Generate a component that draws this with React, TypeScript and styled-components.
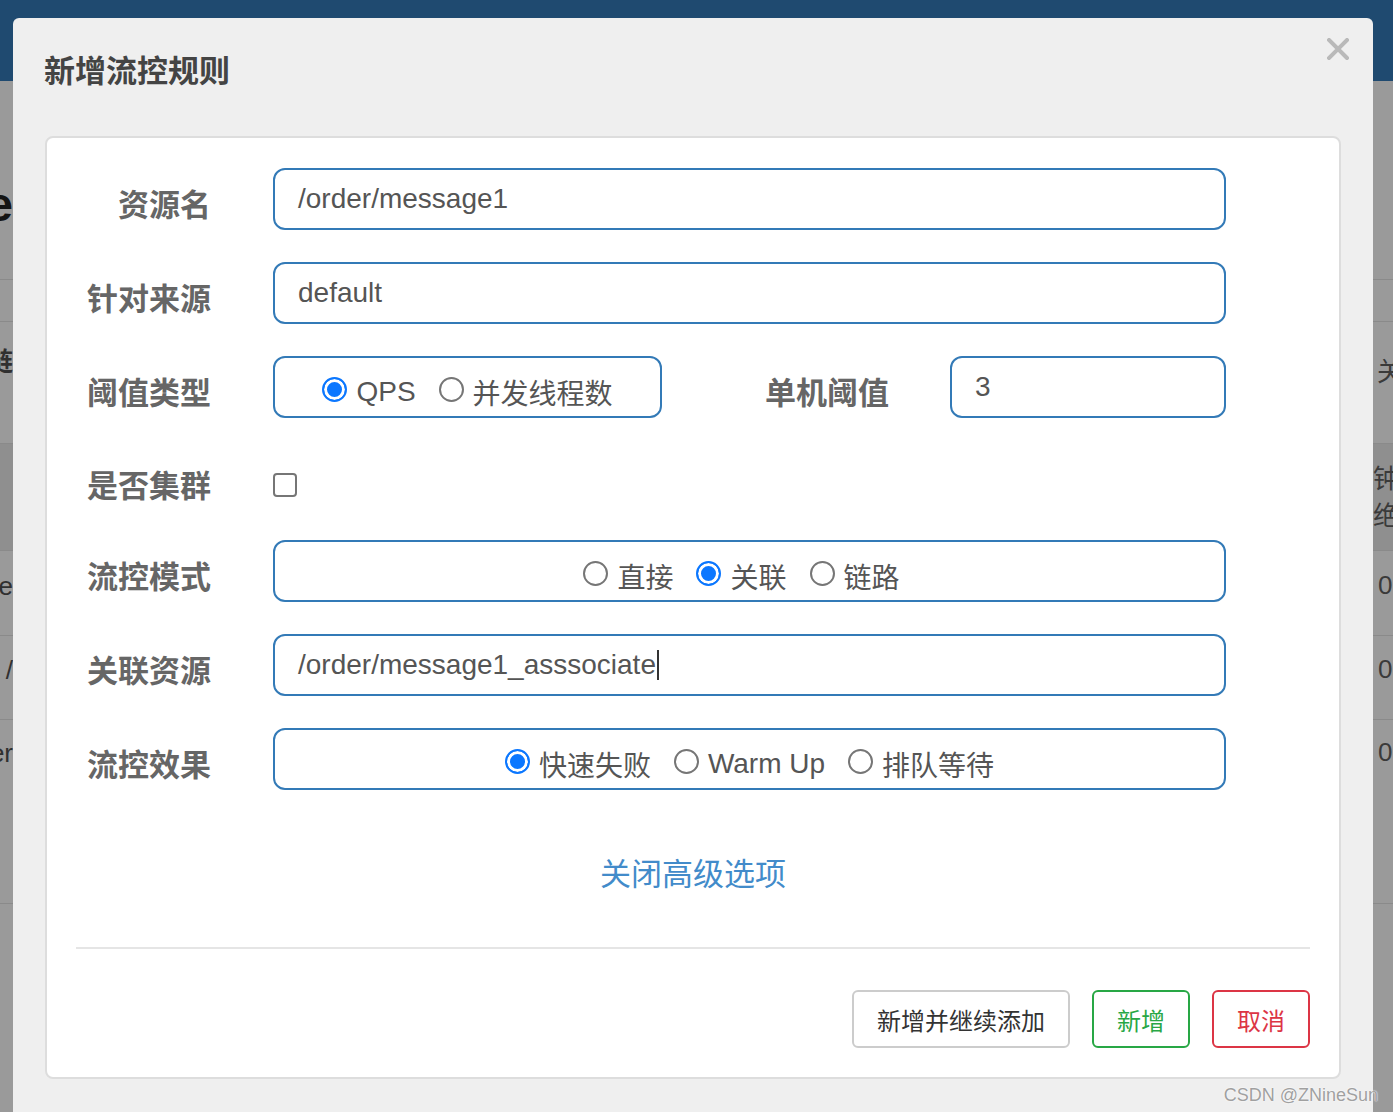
import React from 'react';
import styled, { createGlobalStyle } from 'styled-components';

const GlobalStyle = createGlobalStyle`
  html, body {
    margin: 0;
    padding: 0;
  }
  body {
    font-family: "Liberation Sans", "Noto Sans CJK SC", sans-serif;
    background: #9a9a9a;
  }
`;

const Screen = styled.div`
  position: relative;
  height: 1112px;
  overflow: hidden;
  background: #9a9a9a;
`;

/* dimmed page behind the dialog */

const TopBar = styled.div`
  height: 81px;
  background: #1f4a70;
`;

const BgRow = styled.div<{ $h: number; $dark?: boolean }>`
  box-sizing: border-box;
  height: ${({ $h }) => $h}px;
  display: flex;
  justify-content: space-between;
  border-bottom: 1px solid #8a8a8a;
  background: ${({ $dark }) => ($dark ? '#8f8f8f' : '#9a9a9a')};
`;

const EdgeLeft = styled.div<{ $top: number; $big?: boolean; $bold?: boolean }>`
  width: 13px;
  overflow: hidden;
  display: flex;
  justify-content: flex-end;
  white-space: nowrap;
  padding-top: ${({ $top }) => $top}px;
  font-size: ${({ $big }) => ($big ? 48 : 26)}px;
  font-weight: ${({ $big, $bold }) => ($big || $bold ? 700 : 400)};
  line-height: ${({ $big }) => ($big ? 48 : 26)}px;
  color: ${({ $big }) => ($big ? '#141414' : '#303030')};
`;

const EdgeRight = styled.div<{ $top: number; $indent?: number }>`
  box-sizing: border-box;
  width: 20px;
  overflow: hidden;
  white-space: nowrap;
  padding-top: ${({ $top }) => $top}px;
  padding-left: ${({ $indent }) => $indent ?? 0}px;
  font-size: 26px;
  line-height: 37px;
  color: #3a3a3a;
`;

/* dialog */

const Modal = styled.div`
  position: absolute;
  left: 13px;
  top: 18px;
  width: 1360px;
  height: 1130px;
  background: #efefef;
  border-radius: 6px;
`;

const ModalHeader = styled.div`
  position: relative;
  padding: 30px 31px 0;
`;

const Title = styled.h4`
  margin: 0;
  font-size: 31px;
  line-height: 48px;
  font-weight: 700;
  color: #444;
`;

const Close = styled.span`
  position: absolute;
  top: 20px;
  right: 24px;
  width: 22px;
  height: 22px;
  display: block;
`;

const ModalBody = styled.div`
  padding: 40px 32px 0;
`;

const Panel = styled.div`
  border: 2px solid #dddddd;
  border-radius: 8px;
  background: #fff;
  padding-top: 30px;
`;

const Form = styled.div`
  display: flex;
  flex-direction: column;
  gap: 32px;
  padding-right: 113px;
`;

const FormRow = styled.div<{ $h?: number }>`
  display: grid;
  grid-template-columns: 164px 1fr;
  column-gap: 62px;
  align-items: center;
  height: ${({ $h }) => $h ?? 62}px;
`;

const Label = styled.div<{ $shift?: number }>`
  text-align: right;
  font-size: 31px;
  font-weight: 700;
  color: #666;
  padding-top: ${({ $shift }) => $shift ?? 6}px;
`;

const Field = styled.div<{ $w?: number }>`
  box-sizing: border-box;
  height: 62px;
  width: ${({ $w }) => ($w ? `${$w}px` : 'auto')};
  border: 2px solid #337ab7;
  border-radius: 12px;
  background: #fff;
  padding: 0 23px;
  display: flex;
  align-items: center;
  font-size: 28px;
  color: #555;
`;

const Caret = styled.span`
  display: inline-block;
  width: 2px;
  height: 30px;
  margin-left: 1px;
  background: #333;
`;

const SplitControl = styled.div`
  display: flex;
  align-items: center;
`;

const SubLabel = styled(Label)`
  flex: 1;
  padding-right: 61px;
`;

const RadioBox = styled(Field)<{ $trail?: number }>`
  justify-content: center;
  gap: 23px;
  padding: 9px ${({ $trail }) => $trail ?? 0}px 0 0;
`;

const Option = styled.label`
  display: flex;
  align-items: center;
  gap: 9px;
  font-size: 28px;
  color: #555;
`;

const RadioDot = styled.span<{ $checked?: boolean }>`
  box-sizing: border-box;
  width: 25px;
  height: 25px;
  border-radius: 50%;
  margin-top: -4px;
  border: 2px solid ${({ $checked }) => ($checked ? '#0b77ff' : '#767676')};
  background: ${({ $checked }) => ($checked ? '#0b77ff' : '#fff')};
  box-shadow: ${({ $checked }) => ($checked ? 'inset 0 0 0 3px #fff' : 'none')};
`;

const CheckBox = styled.span`
  box-sizing: border-box;
  display: block;
  width: 24px;
  height: 24px;
  margin-top: 12px;
  border: 2px solid #767676;
  border-radius: 4px;
  background: #fff;
`;

const AdvancedLink = styled.a`
  display: block;
  margin-top: 65px;
  text-align: center;
  font-size: 31px;
  line-height: 40px;
  color: #428bca;
  text-decoration: none;
`;

const Divider = styled.div`
  margin: 52px 29px 0;
  border-top: 2px solid #e5e5e5;
`;

const Footer = styled.div`
  display: flex;
  justify-content: flex-end;
  gap: 22px;
  padding: 41px 29px 29px;
`;

const tones = {
  plain: { border: '#cccccc', color: '#333' },
  success: { border: '#28a745', color: '#28a745' },
  danger: { border: '#dc3545', color: '#dc3545' },
};

const Button = styled.button<{ $tone: keyof typeof tones }>`
  height: 58px;
  padding: 0 23px;
  font-family: inherit;
  font-size: 24px;
  background: #fff;
  border: 2px solid ${({ $tone }) => tones[$tone].border};
  color: ${({ $tone }) => tones[$tone].color};
  border-radius: 6px;
`;

const Watermark = styled.div`
  position: absolute;
  right: 15px;
  bottom: 6px;
  font-size: 18px;
  line-height: 22px;
  color: #a0a0a0;
  text-shadow: 0 0 1px #fff, 0 0 2px #fff;
`;

type Opt = { text: string; checked?: boolean };

const Radios: React.FC<{ options: Opt[]; width?: number; trail?: number }> = ({
  options,
  width,
  trail,
}) => (
  <RadioBox $w={width} $trail={trail}>
    {options.map((o) => (
      <Option key={o.text}>
        <RadioDot $checked={o.checked} />
        {o.text}
      </Option>
    ))}
  </RadioBox>
);

const App: React.FC = () => {
  return (
    <Screen>
      <GlobalStyle />
      <TopBar />
      <BgRow $h={199}>
        <EdgeLeft $top={100} $big>
          Rule
        </EdgeLeft>
        <EdgeRight $top={0} />
      </BgRow>
      <BgRow $h={42}>
        <EdgeLeft $top={0} />
        <EdgeRight $top={0} />
      </BgRow>
      <BgRow $h={122}>
        <EdgeLeft $top={27} $bold>
          簇点链
        </EdgeLeft>
        <EdgeRight $top={32} $indent={4}>
          关
        </EdgeRight>
      </BgRow>
      <BgRow $h={107} $dark>
        <EdgeLeft $top={0} />
        <EdgeRight $top={17}>
          钟
          <br />
          绝
        </EdgeRight>
      </BgRow>
      <BgRow $h={85}>
        <EdgeLeft $top={22}>ge</EdgeLeft>
        <EdgeRight $top={16} $indent={5}>
          0
        </EdgeRight>
      </BgRow>
      <BgRow $h={84}>
        <EdgeLeft $top={21}>/</EdgeLeft>
        <EdgeRight $top={15} $indent={5}>
          0
        </EdgeRight>
      </BgRow>
      <BgRow $h={184}>
        <EdgeLeft $top={20}>der</EdgeLeft>
        <EdgeRight $top={14} $indent={5}>
          0
        </EdgeRight>
      </BgRow>

      <Modal>
        <ModalHeader>
          <Title>新增流控规则</Title>
          <Close>
            <svg width="22" height="22" viewBox="0 0 22 22">
              <path d="M2 2 L20 20 M20 2 L2 20" stroke="#b9b9b9" strokeWidth="4" strokeLinecap="square" />
            </svg>
          </Close>
        </ModalHeader>
        <ModalBody>
          <Panel>
            <Form>
              <FormRow>
                <Label>资源名</Label>
                <Field>/order/message1</Field>
              </FormRow>
              <FormRow>
                <Label>针对来源</Label>
                <Field>default</Field>
              </FormRow>
              <FormRow>
                <Label>阈值类型</Label>
                <SplitControl>
                  <Radios width={389} options={[{ text: 'QPS', checked: true }, { text: '并发线程数' }]} />
                  <SubLabel>单机阈值</SubLabel>
                  <Field $w={276}>3</Field>
                </SplitControl>
              </FormRow>
              <FormRow $h={58}>
                <Label $shift={8}>是否集群</Label>
                <CheckBox />
              </FormRow>
              <FormRow>
                <Label>流控模式</Label>
                <Radios
                  trail={16}
                  options={[{ text: '直接' }, { text: '关联', checked: true }, { text: '链路' }]}
                />
              </FormRow>
              <FormRow>
                <Label>关联资源</Label>
                <Field>
                  /order/message1_asssociate
                  <Caret />
                </Field>
              </FormRow>
              <FormRow>
                <Label>流控效果</Label>
                <Radios
                  options={[{ text: '快速失败', checked: true }, { text: 'Warm Up' }, { text: '排队等待' }]}
                />
              </FormRow>
            </Form>
            <AdvancedLink>关闭高级选项</AdvancedLink>
            <Divider />
            <Footer>
              <Button $tone="plain">新增并继续添加</Button>
              <Button $tone="success">新增</Button>
              <Button $tone="danger">取消</Button>
            </Footer>
          </Panel>
        </ModalBody>
      </Modal>
      <Watermark>CSDN @ZNineSun</Watermark>
    </Screen>
  );
};

export default App;
